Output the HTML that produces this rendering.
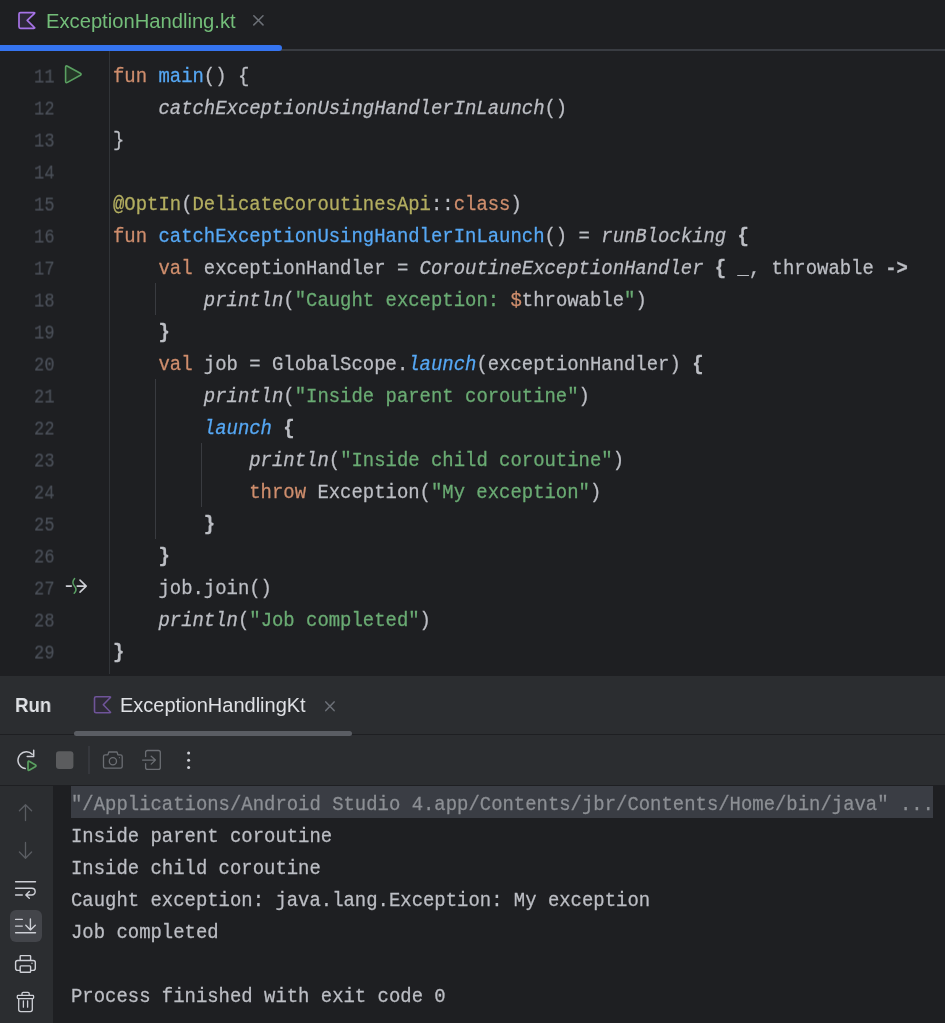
<!DOCTYPE html>
<html><head><meta charset="utf-8">
<style>
*{margin:0;padding:0;box-sizing:border-box}
html,body{width:945px;height:1023px;overflow:hidden;background:#1e1f22}
body{position:relative;font-family:"Liberation Sans",sans-serif}
.abs{position:absolute}
.mono{font-family:"Liberation Mono",monospace;font-size:18.93px;white-space:pre;line-height:32px;transform:scaleY(1.08);transform-origin:0 21px;-webkit-text-stroke:0.25px currentColor}
.ln{position:absolute;left:0;width:54.5px;text-align:right;color:#4b5059;font-family:"Liberation Mono",monospace;font-size:18.93px;line-height:32px;transform:scale(0.9,1.07);transform-origin:54.5px 21px;-webkit-text-stroke:0.2px currentColor}
.code{position:absolute;left:112.5px;color:#bcbec4}
.k{color:#cf8e6d}
.f{color:#56a8f5}
.s{color:#6aab73}
.a{color:#b3ae60}
.i{font-style:italic}
.b{font-weight:bold}
.con{position:absolute;left:70.5px;color:#bcbec4}
svg.ov{position:absolute;left:0;top:0}
.mono,.ln{will-change:transform}
</style></head><body>

<!-- tab bar -->
<div class="abs" style="left:0;top:49.4px;width:945px;height:1.6px;background:#393c42"></div>
<div class="abs" style="left:0;top:45px;width:282px;height:6px;background:#3574f0;border-radius:0 3px 3px 0"></div>
<div class="abs" style="left:45.5px;top:8.5px;font-size:20.2px;line-height:24px;color:#73bd79;will-change:transform">ExceptionHandling.kt</div>

<!-- editor gutter line -->
<div class="abs" style="left:109px;top:51px;width:1px;height:623px;background:#313438"></div>
<!-- indent guides -->
<div class="abs" style="left:155px;top:283px;width:1px;height:32px;background:#393b40"></div>
<div class="abs" style="left:155px;top:379px;width:1px;height:160px;background:#393b40"></div>
<div class="abs" style="left:201px;top:443px;width:1px;height:64px;background:#393b40"></div>

<div class="ln" style="top:62.0px">11</div>
<div class="mono code" style="top:60.5px"><span class="k">fun</span> <span class="f">main</span>() {</div>
<div class="ln" style="top:94.0px">12</div>
<div class="mono code" style="top:92.5px">    <span class="i">catchExceptionUsingHandlerInLaunch</span>()</div>
<div class="ln" style="top:126.0px">13</div>
<div class="mono code" style="top:124.5px">}</div>
<div class="ln" style="top:158.0px">14</div>
<div class="mono code" style="top:156.5px"></div>
<div class="ln" style="top:190.0px">15</div>
<div class="mono code" style="top:188.5px"><span class="a">@OptIn</span>(<span class="a">DelicateCoroutinesApi</span>::<span class="k">class</span>)</div>
<div class="ln" style="top:222.0px">16</div>
<div class="mono code" style="top:220.5px"><span class="k">fun</span> <span class="f">catchExceptionUsingHandlerInLaunch</span>() = <span class="i">runBlocking</span> <span class="b">{</span></div>
<div class="ln" style="top:254.0px">17</div>
<div class="mono code" style="top:252.5px">    <span class="k">val</span> exceptionHandler = <span class="i">CoroutineExceptionHandler</span> <span class="b">{</span> _, throwable <span class="b">-&gt;</span></div>
<div class="ln" style="top:286.0px">18</div>
<div class="mono code" style="top:284.5px">        <span class="i">println</span>(<span class="s">"Caught exception: </span><span class="k">$</span>throwable<span class="s">"</span>)</div>
<div class="ln" style="top:318.0px">19</div>
<div class="mono code" style="top:316.5px">    <span class="b">}</span></div>
<div class="ln" style="top:350.0px">20</div>
<div class="mono code" style="top:348.5px">    <span class="k">val</span> job = GlobalScope.<span class="i f">launch</span>(exceptionHandler) <span class="b">{</span></div>
<div class="ln" style="top:382.0px">21</div>
<div class="mono code" style="top:380.5px">        <span class="i">println</span>(<span class="s">"Inside parent coroutine"</span>)</div>
<div class="ln" style="top:414.0px">22</div>
<div class="mono code" style="top:412.5px">        <span class="i f">launch</span> <span class="b">{</span></div>
<div class="ln" style="top:446.0px">23</div>
<div class="mono code" style="top:444.5px">            <span class="i">println</span>(<span class="s">"Inside child coroutine"</span>)</div>
<div class="ln" style="top:478.0px">24</div>
<div class="mono code" style="top:476.5px">            <span class="k">throw</span> Exception(<span class="s">"My exception"</span>)</div>
<div class="ln" style="top:510.0px">25</div>
<div class="mono code" style="top:508.5px">        <span class="b">}</span></div>
<div class="ln" style="top:542.0px">26</div>
<div class="mono code" style="top:540.5px">    <span class="b">}</span></div>
<div class="ln" style="top:574.0px">27</div>
<div class="mono code" style="top:572.5px">    job.join()</div>
<div class="ln" style="top:606.0px">28</div>
<div class="mono code" style="top:604.5px">    <span class="i">println</span>(<span class="s">"Job completed"</span>)</div>
<div class="ln" style="top:638.0px">29</div>
<div class="mono code" style="top:636.5px"><span class="b">}</span></div>

<!-- run panel -->
<div class="abs" style="left:0;top:676px;width:945px;height:110px;background:#2b2d30"></div>
<div class="abs" style="left:0;top:734px;width:945px;height:1px;background:#1e1f22"></div>
<div class="abs" style="left:73.5px;top:731px;width:278px;height:4.5px;background:#5a5d63;border-radius:2.5px"></div>
<div class="abs" style="left:0;top:785px;width:945px;height:1px;background:#1e1f22"></div>
<div class="abs" style="left:0;top:786px;width:53px;height:237px;background:#2b2d30"></div>
<div class="abs" style="left:14.8px;top:689.5px;font-size:20.5px;line-height:30px;font-weight:bold;color:#dfe1e5;transform:scaleX(0.91);transform-origin:0 0;will-change:transform">Run</div>
<div class="abs" style="left:120px;top:690px;font-size:20px;line-height:30px;color:#dfe1e5;will-change:transform">ExceptionHandlingKt</div>
<div class="abs" style="left:9.5px;top:910px;width:32px;height:32px;background:#43454a;border-radius:6px"></div>

<div class="abs" style="left:71px;top:786px;width:862px;height:32px;background:#3a3d44"></div>
<div class="mono con" style="top:788.5px;color:#8c8f94">"/Applications/Android Studio 4.app/Contents/jbr/Contents/Home/bin/java" ...</div>
<div class="mono con" style="top:820.5px">Inside parent coroutine</div>
<div class="mono con" style="top:852.5px">Inside child coroutine</div>
<div class="mono con" style="top:884.5px">Caught exception: java.lang.Exception: My exception</div>
<div class="mono con" style="top:916.5px">Job completed</div>
<div class="mono con" style="top:948.5px"></div>
<div class="mono con" style="top:980.5px">Process finished with exit code 0</div>

<svg class="ov" width="945" height="1023" viewBox="0 0 945 1023" fill="none" stroke-linecap="round" stroke-linejoin="round">
  <!-- kotlin tab icon -->
  <path d="M19 14.1 Q19 12.6 20.5 12.6 H33.9 Q35.4 12.6 34.3 13.6 L27.2 20.45 L34.3 27.3 Q35.4 28.3 33.9 28.3 H20.5 Q19 28.3 19 26.8 Z" fill="#2d2838" stroke="#a673e6" stroke-width="1.7"/>
  <!-- tab close -->
  <path d="M253.8 15.7 L263 24.9 M263 15.7 L253.8 24.9" stroke="#6c7077" stroke-width="1.5"/>
  <!-- gutter run -->
  <path d="M65.6 67.3 Q65.6 65.2 67.5 66.2 L80.3 73.3 Q81.9 74.3 80.3 75.3 L67.5 82.4 Q65.6 83.4 65.6 81.3 Z" fill="#243526" stroke="#5aa061" stroke-width="1.6"/>
  <!-- suspend -->
  <path d="M66.4 586.1 H71.3" stroke="#ced0d6" stroke-width="1.6"/>
  <path d="M74.6 578.6 C72.3 581.2 72.6 584 74.4 586.1 C76.3 588.3 76.5 591 74.2 593.3" stroke="#5aa064" stroke-width="1.5"/>
  <path d="M77.2 586.1 H86 M80 580.1 L86.2 586.1 L80 592.1" stroke="#ced0d6" stroke-width="1.6"/>
  <!-- run tab kotlin icon -->
  <path d="M94.5 698.3 Q94.5 696.8 96 696.8 H109.7 Q111.2 696.8 110.1 697.8 L103.3 704.8 L110.1 711.8 Q111.2 712.8 109.7 712.8 H96 Q94.5 712.8 94.5 711.3 Z" fill="#2e2b37" stroke="#6f5499" stroke-width="1.6"/>
  <!-- run tab close -->
  <path d="M325.8 701.9 L334.1 710.6 M334.1 701.9 L325.8 710.6" stroke="#6c7077" stroke-width="1.5"/>
  <!-- rerun -->
  <path d="M32.2 754.2 A8.4 8.4 0 1 0 25.2 768.6" stroke="#ced0d6" stroke-width="1.5"/>
  <path d="M27.2 756.5 H33.7 V750.3" stroke="#ced0d6" stroke-width="1.5"/>
  <path d="M28 762.4 Q28 760.6 29.6 761.5 L35.2 764.8 Q36.8 765.8 35.2 766.8 L29.6 770.1 Q28 771 28 769.2 Z" fill="#243526" stroke="#5aa061" stroke-width="1.7"/>
  <!-- stop -->
  <rect x="56" y="751.3" width="17.4" height="17.6" rx="3" fill="#5b5c5e"/>
  <!-- separator -->
  <path d="M89 746 V774" stroke="#43454a" stroke-width="1" stroke-linecap="butt"/>
  <!-- camera -->
  <path d="M105.2 754.8 H107.9 L108.8 752 H117 L117.9 754.8 H120.4 Q122.2 754.8 122.2 756.6 V766.4 Q122.2 768.2 120.4 768.2 H105.2 Q103.5 768.2 103.5 766.4 V756.6 Q103.5 754.8 105.2 754.8 Z" stroke="#6b6e73" stroke-width="1.3"/>
  <circle cx="112.9" cy="761.3" r="3.6" stroke="#6b6e73" stroke-width="1.3"/>
  <circle cx="119.4" cy="757.7" r="0.6" fill="#6b6e73"/>
  <!-- exit -->
  <path d="M145.6 756.6 V752.5 Q145.6 750.5 147.6 750.5 H158.3 Q160.3 750.5 160.3 752.5 V767.4 Q160.3 769.4 158.3 769.4 H147.6 Q145.6 769.4 145.6 767.4 V763.6" stroke="#6b6e73" stroke-width="1.3"/>
  <path d="M142.6 760.1 H155.4 M151.2 756.2 L155.4 760.1 L151.2 764.1" stroke="#6b6e73" stroke-width="1.3"/>
  <!-- dots -->
  <circle cx="188.6" cy="753" r="1.5" fill="#ced0d6"/>
  <circle cx="188.6" cy="760.3" r="1.5" fill="#ced0d6"/>
  <circle cx="188.6" cy="767.6" r="1.5" fill="#ced0d6"/>
  <!-- up/down -->
  <path d="M25.5 805 V820.6 M19.4 810.8 L25.5 804.8 L31.6 810.8" stroke="#5a5d62" stroke-width="1.3"/>
  <path d="M25.5 842.4 V858 M19.4 852 L25.5 858.2 L31.6 852" stroke="#5a5d62" stroke-width="1.3"/>
  <!-- soft wrap -->
  <path d="M15.6 881.7 H35.5 M15.6 888.3 H31.8 A3.35 3.35 0 0 1 31.8 895 H25.8 M29.3 891.6 L25.8 895 L29.3 898.2 M15.6 895 H22.3" stroke="#ced0d6" stroke-width="1.4"/>
  <!-- scroll to end -->
  <path d="M15.6 919.4 H22.3 M15.6 926.1 H22.3 M15.6 932.8 H35.5 M30.4 919 V930 M25.8 925.2 L30.4 929.9 L35.3 925.2" stroke="#ced0d6" stroke-width="1.4"/>
  <!-- print -->
  <path d="M20.2 960.4 V956.2 Q20.2 955.6 20.8 955.6 H30 Q30.6 955.6 30.6 956.2 V960.4" stroke="#ced0d6" stroke-width="1.4"/>
  <path d="M19.9 970.4 H17.7 Q15.6 970.4 15.6 968.3 V962.6 Q15.6 960.5 17.7 960.5 H33.2 Q35.3 960.5 35.3 962.6 V968.3 Q35.3 970.4 33.2 970.4 H30.9" stroke="#ced0d6" stroke-width="1.4"/>
  <rect x="20.2" y="965.9" width="10.4" height="6.3" rx="0.8" stroke="#ced0d6" stroke-width="1.4"/>
  <circle cx="32" cy="963.3" r="0.7" fill="#ced0d6"/>
  <!-- trash -->
  <path d="M22 995 V993.5 Q22 992.3 23.2 992.3 H28 Q29.2 992.3 29.2 993.5 V995" stroke="#ced0d6" stroke-width="1.3"/>
  <rect x="17.3" y="995.4" width="16.3" height="3.2" rx="0.8" stroke="#ced0d6" stroke-width="1.3"/>
  <path d="M18.7 998.8 V1009.6 Q18.7 1011.7 20.8 1011.7 H30.2 Q32.3 1011.7 32.3 1009.6 V998.8" stroke="#ced0d6" stroke-width="1.3"/>
  <path d="M23.4 1000.8 V1007.2 M27.6 1000.8 V1007.2" stroke="#ced0d6" stroke-width="1.3"/>
</svg>
</body></html>
